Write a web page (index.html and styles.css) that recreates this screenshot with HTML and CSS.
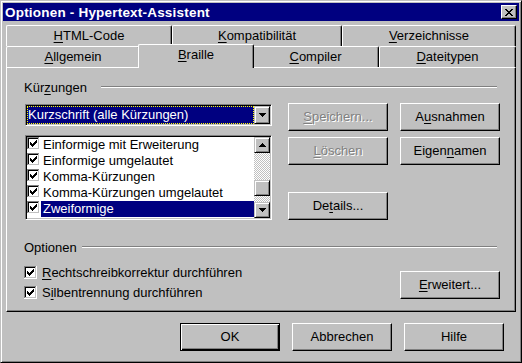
FILE: index.html
```html
<!DOCTYPE html>
<html lang="de">
<head>
<meta charset="utf-8">
<title>Optionen - Hypertext-Assistent</title>
<link rel="stylesheet" href="styles.css">
</head>
<body>
<svg class="defs" width="0" height="0" aria-hidden="true">
  <defs>
    <symbol id="cb" viewBox="0 0 13 13">
      <rect width="13" height="13" fill="#fff"/>
      <rect width="12" height="1" fill="#808080"/>
      <rect width="1" height="12" fill="#808080"/>
      <rect x="1" y="1" width="11" height="11" fill="#c0c0c0"/>
      <rect x="1" y="1" width="10" height="1" fill="#000"/>
      <rect x="1" y="1" width="1" height="10" fill="#000"/>
      <rect x="2" y="2" width="9" height="9" fill="#fff"/>
      <path fill="#000" d="M9 3h1v1h-1z M8 4h2v1h-2z M3 5h1v1h-1z M7 5h3v1h-3z M3 6h2v1h-2z M6 6h3v1h-3z M3 7h5v1h-5z M4 8h3v1h-3z M5 9h1v1h-1z"/>
    </symbol>
    <symbol id="up" viewBox="0 0 7 4">
      <path fill="#000" d="M3 0h1v1h1v1h1v1h1v1H0V3h1V2h1V1h1z"/>
    </symbol>
    <symbol id="down" viewBox="0 0 7 4">
      <path fill="#000" d="M0 0h7v1H6v1H5v1H4v1H3V3H2V2H1V1H0z"/>
    </symbol>
  </defs>
</svg>
<div class="window">
  <div class="titlebar">
    <span class="title">Optionen - Hypertext-Assistent</span>
    <span class="close"><svg width="8" height="7" viewBox="0 0 8 7"><path fill="#000" d="M0 0h2v1H0z M6 0h2v1H6z M1 1h2v1H1z M5 1h2v1H5z M2 2h4v1H2z M3 3h2v1H3z M2 4h4v1H2z M1 5h2v1H1z M5 5h2v1H5z M0 6h2v1H0z M6 6h2v1H6z"/></svg></span>
  </div>
  <div class="main">
    <div class="tabs">
      <div class="tabrow">
        <div class="tab t-html"><u>H</u>TML-Code</div>
        <div class="tab t-komp"><u>K</u>ompatibilität</div>
        <div class="tab t-verz"><u>V</u>erzeichnisse</div>
      </div>
      <div class="tabrow">
        <div class="tab t-allg"><u>A</u>llgemein</div>
        <div class="tab t-brl sel"><u>B</u>raille</div>
        <div class="tab t-comp"><u>C</u>ompiler</div>
        <div class="tab t-date"><u>D</u>ateitypen</div>
      </div>
    </div>
    <div class="panel">
      <div class="ghead"><span>Kür<u>z</u>ungen</span><span class="etch etch-k"></span></div>
      <div class="krow">
        <div class="leftcol">
          <div class="combo">
            <div class="combo-val">Kurzschrift (alle Kürzungen)</div>
            <div class="sbtn combo-btn"><svg width="7" height="4"><use href="#down"/></svg></div>
          </div>
          <div class="listbox">
            <div class="items">
              <div class="item"><svg class="cbx" width="13" height="13"><use href="#cb"/></svg><span class="lbl">Einformige mit Erweiterung</span></div>
              <div class="item"><svg class="cbx" width="13" height="13"><use href="#cb"/></svg><span class="lbl">Einformige umgelautet</span></div>
              <div class="item"><svg class="cbx" width="13" height="13"><use href="#cb"/></svg><span class="lbl">Komma-Kürzungen</span></div>
              <div class="item"><svg class="cbx" width="13" height="13"><use href="#cb"/></svg><span class="lbl">Komma-Kürzungen umgelautet</span></div>
              <div class="item"><svg class="cbx" width="13" height="13"><use href="#cb"/></svg><span class="lbl hl">Zweiformige</span></div>
            </div>
            <div class="scrollbar">
              <div class="sbtn"><svg width="7" height="4"><use href="#up"/></svg></div>
              <div class="track"><div class="thumb"></div></div>
              <div class="sbtn"><svg width="7" height="4"><use href="#down"/></svg></div>
            </div>
          </div>
        </div>
        <div class="rightcol">
          <div class="btn disabled"><u>S</u>peichern...</div>
          <div class="btn">A<u>u</u>snahmen</div>
          <div class="btn disabled"><u>L</u>öschen</div>
          <div class="btn">Eigen<u>n</u>amen</div>
          <div class="btn details">De<u>t</u>ails...</div>
        </div>
      </div>
      <div class="ghead ghead-opt"><span>Optionen</span><span class="etch etch-o"></span></div>
      <div class="orow">
        <div class="checks">
          <div class="chk"><svg width="13" height="13"><use href="#cb"/></svg><span><u>R</u>echtschreibkorrektur durchführen</span></div>
          <div class="chk"><svg width="13" height="13"><use href="#cb"/></svg><span>S<u>i</u>lbentrennung durchführen</span></div>
        </div>
        <div class="btn erw"><u>E</u>rweitert...</div>
      </div>
    </div>
    <div class="footer">
      <div class="btn default">OK</div>
      <div class="btn">Abbrechen</div>
      <div class="btn">Hilfe</div>
    </div>
  </div>
</div>
</body>
</html>
```

FILE: styles.css
```css
* { box-sizing: border-box; }
html, body { margin: 0; padding: 0; background: #c0c0c0; }
body {
  font-family: "Liberation Sans", Arial, sans-serif;
  font-size: 13px;
  color: #000;
}
u { text-decoration: underline; text-underline-offset: 2px; text-decoration-thickness: 1px; }
.defs { position: absolute; width: 0; height: 0; overflow: hidden; }
svg { display: block; }

.window {
  width: 522px;
  height: 363px;
  background: #c0c0c0;
  border: 1px solid;
  border-color: #c0c0c0 #000 #000 #c0c0c0;
  box-shadow: inset 1px 1px #fff, inset -1px -1px #808080;
  padding: 2px;
}

.titlebar {
  height: 18px;
  background: #000080;
  color: #fff;
  display: flex;
  align-items: center;
  justify-content: space-between;
  padding: 0 2px 0 2px;
}
.title { font-weight: bold; font-size: 13.5px; letter-spacing: 0.2px; }
.close {
  width: 16px;
  height: 14px;
  background: #c0c0c0;
  border: 1px solid;
  border-color: #fff #000 #000 #fff;
  box-shadow: inset -1px -1px #808080;
  display: flex;
  align-items: center;
  justify-content: center;
  padding-right: 1px;
}

.main { padding: 4px 3px 0; }

.tabrow { display: flex; height: 21px; }
.tab {
  height: 21px;
  background: #c0c0c0;
  border-top: 1px solid #fff;
  border-left: 1px solid #fff;
  border-right: 1px solid #000;
  box-shadow: inset -1px 0 #808080;
  border-radius: 2px 2px 0 0;
  text-align: center;
  line-height: 20px;
  white-space: nowrap;
}
.t-html { width: 166px; }
.t-komp { width: 170px; }
.t-verz { width: 174px; }
.t-allg { width: 134px; }
.t-brl { width: 116px; }
.t-comp { width: 127px; }
.t-date { width: 137px; }
.tab.sel {
  height: 24px;
  margin: -2px -2px 0;
  position: relative;
  z-index: 1;
}

.panel {
  height: 245px;
  border: 1px solid;
  border-color: #fff #000 #000 #fff;
  box-shadow: inset -1px -1px #808080;
  padding: 11px 15px 0 17px;
}

.ghead {
  display: flex;
  align-items: center;
  height: 16px;
  margin-right: 3px;
  white-space: nowrap;
}
.etch {
  flex: 1;
  height: 2px;
  border-top: 1px solid #808080;
  border-bottom: 1px solid #fff;
}
.etch-k { margin-left: 14px; }
.etch-o { margin-left: 5px; }
.ghead-opt { margin-top: 19px; }

.krow { display: flex; gap: 16px; }
.leftcol { width: 247px; margin-left: 1px; padding-top: 9px; }

.combo, .listbox {
  border: 1px solid;
  border-color: #808080 #fff #fff #808080;
  box-shadow: inset 1px 1px #000, inset -1px -1px #c0c0c0;
  padding: 1px;
  background: #fff;
  display: flex;
}
.combo { height: 22px; }
.combo-val {
  flex: 1;
  background: #000080;
  color: #fff;
  border: 1px dotted #ffff00;
  line-height: 16px;
  white-space: nowrap;
  overflow: hidden;
}
.sbtn {
  width: 16px;
  height: 16px;
  background: #c0c0c0;
  border: 1px solid;
  border-color: #c0c0c0 #000 #000 #c0c0c0;
  box-shadow: inset 1px 1px #fff, inset -1px -1px #808080;
  display: flex;
  align-items: center;
  justify-content: center;
  flex: none;
}
.combo-btn { height: 18px; }

.listbox { height: 85px; margin-top: 9px; }
.items { flex: 1; display: flex; flex-direction: column; }
.item { height: 16px; display: flex; align-items: flex-start; }
.cbx { flex: none; }
.lbl {
  flex: 1;
  margin-left: 1px;
  padding-left: 2px;
  line-height: 16px;
  white-space: nowrap;
}
.lbl.hl { background: #000080; color: #fff; }

.scrollbar { width: 16px; display: flex; flex-direction: column; }
.track {
  flex: 1;
  background: repeating-conic-gradient(#c0c0c0 0 25%, #fff 0 50%) 0 0 / 2px 2px;
}
.thumb {
  width: 16px;
  height: 16px;
  margin-top: 27px;
  background: #c0c0c0;
  border: 1px solid;
  border-color: #c0c0c0 #000 #000 #c0c0c0;
  box-shadow: inset 1px 1px #fff, inset -1px -1px #808080;
}

.rightcol {
  display: grid;
  grid-template-columns: 100px 100px;
  column-gap: 12px;
  row-gap: 6px;
  align-content: start;
  padding-top: 8px;
}
.btn {
  height: 28px;
  width: 100px;
  background: #c0c0c0;
  border: 1px solid;
  border-color: #fff #000 #000 #fff;
  box-shadow: inset -1px -1px #808080;
  text-align: center;
  line-height: 26px;
  white-space: nowrap;
}
.btn.disabled { color: #808080; text-shadow: 1px 1px 0 #fff; }
.btn.details { margin-top: 21px; }
.btn.default {
  border-color: #000;
  box-shadow: inset 1px 1px #fff, inset -1px -1px #000, inset -2px -2px #808080;
}

.orow { display: flex; justify-content: space-between; }
.checks { padding-top: 7px; }
.chk { height: 20px; display: flex; align-items: center; gap: 5px; white-space: nowrap; }
.btn.erw { margin-top: 16px; }

.footer {
  display: flex;
  justify-content: flex-end;
  gap: 12px;
  padding: 11px 12px 0 0;
}
```
